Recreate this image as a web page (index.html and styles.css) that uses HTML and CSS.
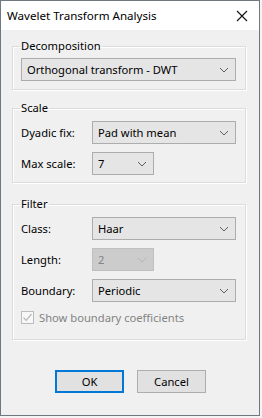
FILE: index.html
```html
<!DOCTYPE html>
<html lang="en">
<head>
  <meta charset="UTF-8">
  <title>Wavelet Transform Analysis</title>
  <link rel="stylesheet" href="styles.css">
</head>
<body>

<div class="window">
  <div class="titlebar">
    <span class="title">Wavelet Transform Analysis</span>
    <svg class="close" width="12" height="12" viewBox="0 0 12 12">
      <path d="M1 1 L11 11 M11 1 L1 11" stroke="#111" stroke-width="1.1" fill="none"/>
    </svg>
  </div>

  <div class="content">
    <fieldset class="group g-decomp">
      <legend>Decomposition</legend>
      <div class="combo wide">
        <span>Orthogonal transform - DWT</span>
        <svg class="chev" width="10" height="6" viewBox="0 0 10 6"><path d="M1 1 L5 5 L9 1" fill="none" stroke="#606060" stroke-width="1"/></svg>
      </div>
    </fieldset>

    <fieldset class="group g-scale">
      <legend>Scale</legend>
      <div class="row">
        <label>Dyadic fix:</label>
        <div class="combo long">
          <span>Pad with mean</span>
          <svg class="chev" width="10" height="6" viewBox="0 0 10 6"><path d="M1 1 L5 5 L9 1" fill="none" stroke="#606060" stroke-width="1"/></svg>
        </div>
      </div>
      <div class="row">
        <label>Max scale:</label>
        <div class="combo short">
          <span>7</span>
          <svg class="chev" width="10" height="6" viewBox="0 0 10 6"><path d="M1 1 L5 5 L9 1" fill="none" stroke="#606060" stroke-width="1"/></svg>
        </div>
      </div>
    </fieldset>

    <fieldset class="group g-filter">
      <legend>Filter</legend>
      <div class="row">
        <label>Class:</label>
        <div class="combo long">
          <span>Haar</span>
          <svg class="chev" width="10" height="6" viewBox="0 0 10 6"><path d="M1 1 L5 5 L9 1" fill="none" stroke="#606060" stroke-width="1"/></svg>
        </div>
      </div>
      <div class="row">
        <label>Length:</label>
        <div class="combo short disabled">
          <span>2</span>
          <svg class="chev" width="10" height="6" viewBox="0 0 10 6"><path d="M1 1 L5 5 L9 1" fill="none" stroke="#b4b4b4" stroke-width="1"/></svg>
        </div>
      </div>
      <div class="row">
        <label>Boundary:</label>
        <div class="combo long">
          <span>Periodic</span>
          <svg class="chev" width="10" height="6" viewBox="0 0 10 6"><path d="M1 1 L5 5 L9 1" fill="none" stroke="#606060" stroke-width="1"/></svg>
        </div>
      </div>
      <div class="check">
        <span class="box">
          <svg width="11" height="11" viewBox="0 0 11 11"><path d="M1.5 5.5 L4.2 8.3 L9.5 2" fill="none" stroke="#b8b8b8" stroke-width="1.2"/></svg>
        </span>
        <span class="check-label">Show boundary coefficients</span>
      </div>
    </fieldset>

    <div class="buttons">
      <button class="btn default">OK</button>
      <button class="btn">Cancel</button>
    </div>
  </div>
</div>

</body>
</html>
```

FILE: styles.css
```css
body {
  margin: 0;
  background: #f4f4f4;
  font-family: "Noto Sans", "Open Sans", sans-serif;
  font-size: 11.2px;
  color: #000;
}
.window {
  width: 258px;
  height: 414px;
  border: 1px solid #6f7782;
  background: #f0f0f0;
}
.titlebar {
  height: 29px;
  background: #fff;
  display: flex;
  align-items: center;
  justify-content: space-between;
  padding: 0 11px 0 6px;
}
.title {
  font-size: 11.6px;
  color: #000;
}
.content {
  padding: 8px 13px 0 11px;
}
.group {
  margin: 0 0 10px 0;
  padding: 4px 8px 8px 8px;
  border: 1px solid #dcdcdc;
  box-shadow: 1px 1px 0 #fff, inset 1px 1px 0 #fff;
}
.group legend {
  padding: 0 1px;
  margin-left: -1px;
  line-height: 16px;
}
.g-scale {
  padding-top: 5px;
  padding-bottom: 7px;
}
.g-filter {
  margin-top: 13px;
  padding-top: 5px;
  padding-bottom: 14px;
}
.row {
  display: flex;
  align-items: center;
  margin-bottom: 8px;
}
.g-scale .row:last-child {
  margin-bottom: 0;
}
.row label {
  width: 71px;
}
.combo {
  height: 21px;
  border: 1px solid #adadad;
  background: #e5e5e5;
  display: flex;
  align-items: center;
  justify-content: space-between;
  padding: 0 6px 0 5px;
}
.combo.wide {
  width: 202px;
}
.combo.long {
  width: 131px;
}
.combo.short {
  width: 49px;
}
.combo.disabled {
  background: #cccccc;
  border-color: #bfbfbf;
  color: #838383;
}
.check {
  display: flex;
  align-items: center;
  margin-top: 2px;
  color: #838383;
}
.box {
  width: 11px;
  height: 11px;
  border: 1px solid #bcbcbc;
  background: #f7f7f7;
  margin-right: 5px;
  display: flex;
}
.buttons {
  display: flex;
  gap: 13px;
  padding: 20px 0 0 43px;
}
.btn {
  width: 69px;
  height: 23px;
  border: 1px solid #adadad;
  background: #e1e1e1;
  font-family: "Noto Sans", "Open Sans", sans-serif;
  font-size: 11.2px;
  color: #000;
  padding: 0;
}
.btn.default {
  border: 2px solid #0078d7;
}
```
